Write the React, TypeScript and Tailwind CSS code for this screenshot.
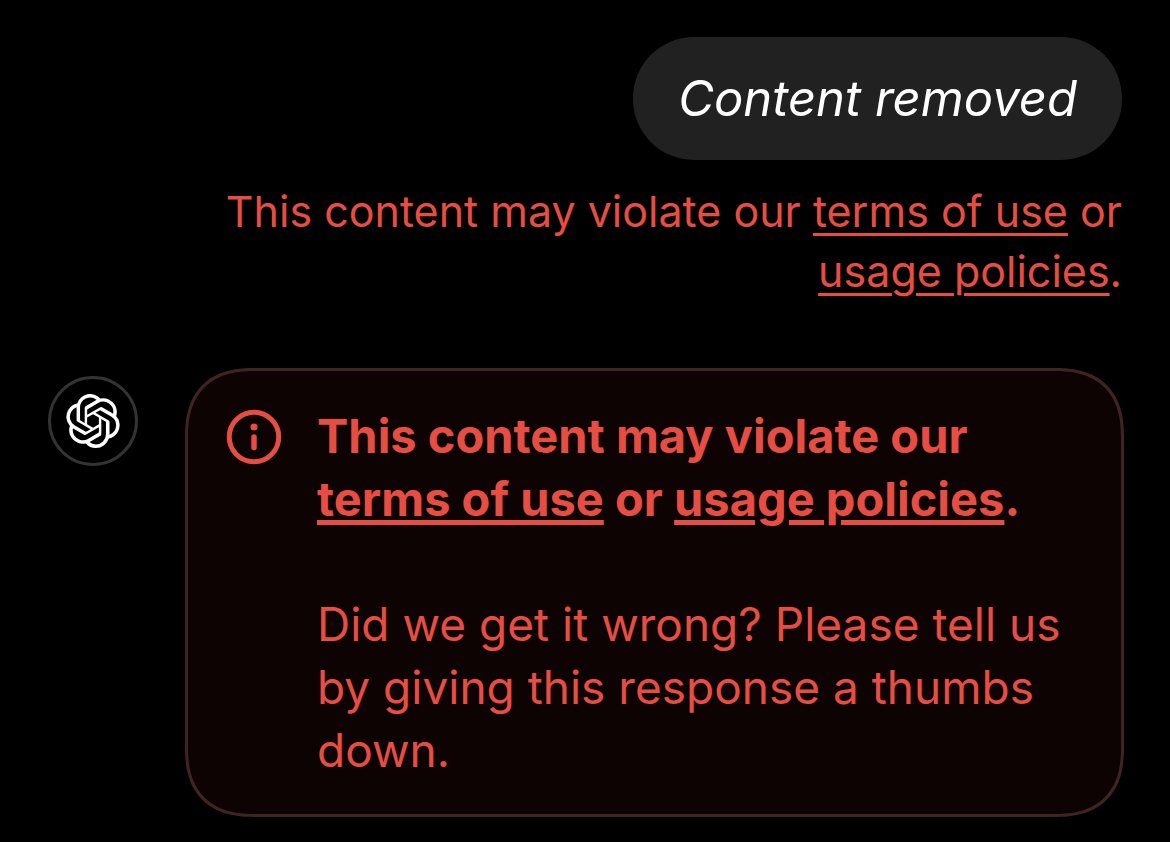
import type { FunctionComponent, ReactNode } from "react"
import { SiOpenai } from "react-icons/si"

const PolicyLink: FunctionComponent<{ children: ReactNode }> = ({
  children,
}) => (
  <a href="#" className="underline">
    {children}
  </a>
)

const InfoIcon = () => (
  <svg
    viewBox="0 0 56 56"
    fill="none"
    className="size-14 shrink-0"
    aria-hidden="true"
  >
    <circle cx="28" cy="28" r="24.75" stroke="currentColor" strokeWidth="5" />
    <circle cx="28" cy="18" r="3.5" fill="currentColor" />
    <path
      d="M28 28v10.5"
      stroke="currentColor"
      strokeWidth="5.5"
      strokeLinecap="round"
    />
  </svg>
)

const UserMessage = () => (
  <div className="flex flex-col items-end pr-0.5">
    <p className="rounded-[61px] bg-[#212121] px-[45px] py-[30px] text-[49px] leading-[63px] text-white italic">
      Content removed
    </p>
    <p className="mt-[21px] max-w-[920px] text-right text-[43px] leading-[60px] decoration-3 underline-offset-6">
      This content may violate our <PolicyLink>terms of use</PolicyLink> or{" "}
      <PolicyLink>usage policies</PolicyLink>.
    </p>
  </div>
)

const AssistantMessage = () => (
  <div className="mt-[67px] flex items-start">
    <div className="mt-2 flex size-[90px] shrink-0 items-center justify-center rounded-full border-3 border-[#333333] text-white">
      <SiOpenai className="size-[54px]" aria-hidden="true" />
    </div>
    <div className="ml-[47px] flex flex-1 gap-[35px] rounded-[70px] border-3 border-[#3f2423] bg-[#0c0302] pt-[33px] pr-10 pb-8 pl-[38px] [corner-shape:superellipse(1.3)]">
      <div className="pt-[5px]">
        <InfoIcon />
      </div>
      <div className="text-[46px] leading-[63px]">
        <p className="text-[47px] font-bold decoration-5 underline-offset-4">
          This content may violate our{" "}
          <PolicyLink>terms of use</PolicyLink> or{" "}
          <PolicyLink>usage policies</PolicyLink>.
        </p>
        <p className="mt-[63px]">
          Did we get it wrong? Please tell us by giving this response a thumbs
          down.
        </p>
      </div>
    </div>
  </div>
)

export default function App() {
  return (
    <main className="min-h-screen bg-black pt-[37px] pr-[46px] pb-6 pl-12 font-[Inter,sans-serif] text-[#e64d43]">
      <UserMessage />
      <AssistantMessage />
    </main>
  )
}
